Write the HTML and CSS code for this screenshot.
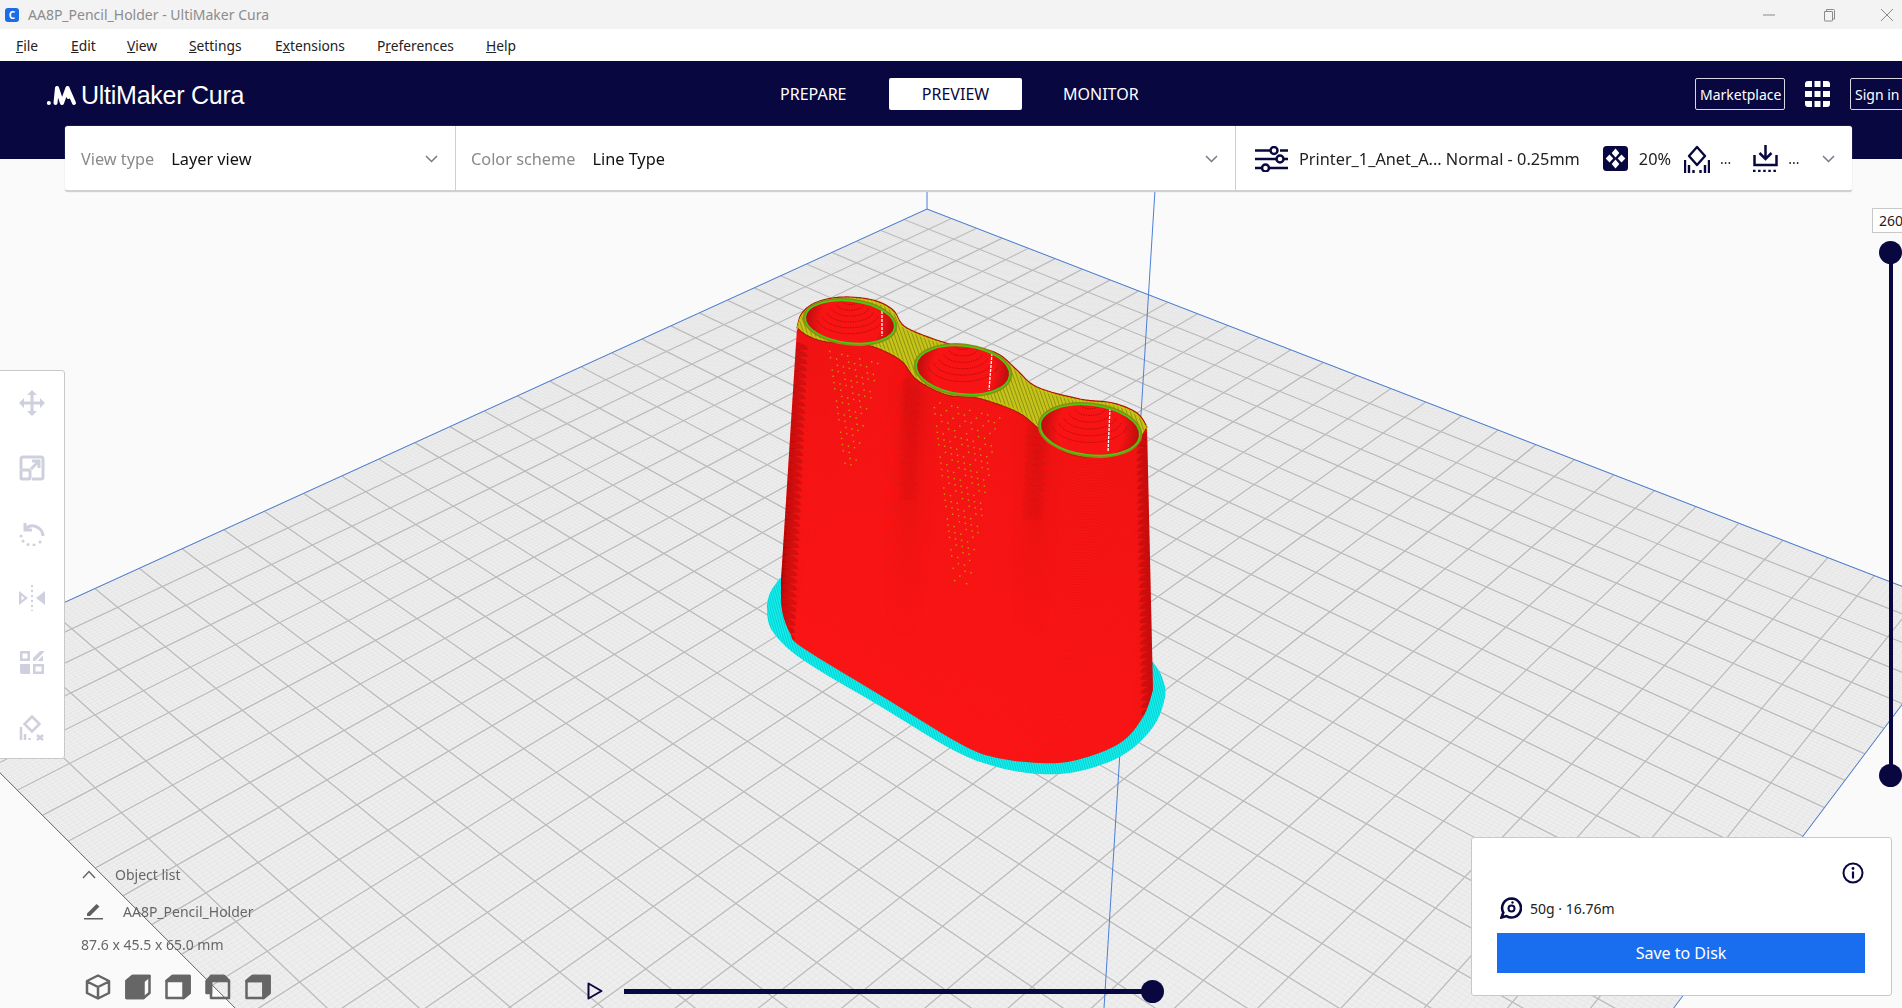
FILE: index.html
```html
<!DOCTYPE html>
<html>

<head>
    <title>AA8P_Pencil_Holder - UltiMaker Cura</title>
    <link rel="stylesheet" href="styles.css">
</head>

<body>
    <div class="titlebar">
        <span class="app-icon">C</span>
        <span class="title-text">AA8P_Pencil_Holder - UltiMaker Cura</span>
        <div class="win-controls">
            <svg width="14" height="14" viewBox="0 0 14 14"><path d="M1 7h12" stroke="#8a8a8a" fill="none"/></svg>
            <svg width="14" height="14" viewBox="0 0 14 14"><path d="M3.500 3.500h7.500a.5.5 0 0 1 .5.5v8.500a.5.5 0 0 1-.5.5H4a.5.5 0 0 1-.5-.5zM5.500 3.500V1.500h7a1 1 0 0 1 1 1V11h-2" stroke="#8a8a8a" fill="none"/></svg>
            <svg width="14" height="14" viewBox="0 0 14 14"><path d="M1 1l12 12M13 1L1 13" stroke="#8a8a8a" fill="none"/></svg>
        </div>
    </div>

    <div class="menubar">
        <span class="menu-item m-file"><u>F</u>ile</span>
        <span class="menu-item m-edit"><u>E</u>dit</span>
        <span class="menu-item m-view"><u>V</u>iew</span>
        <span class="menu-item m-settings"><u>S</u>ettings</span>
        <span class="menu-item m-ext">E<u>x</u>tensions</span>
        <span class="menu-item m-pref">P<u>r</u>eferences</span>
        <span class="menu-item m-help"><u>H</u>elp</span>
    </div>

    <div class="workspace">
        <header class="topbar">
            <div class="logo">
                <svg width="31" height="21" viewBox="0 0 31 21" fill="none" stroke="#fff" stroke-width="4" stroke-linecap="round">
                    <path d="M2.800 18h.1"/>
                    <path d="M11 3L9.500 18M11 3L16 18M21.500 3L16 18M21.500 3L22.500 12M21.500 3L28 18"/>
                </svg>
                <span class="logo-text">UltiMaker Cura</span>
            </div>
            <nav class="tabs">
                <span class="tab tab-prepare">PREPARE</span>
                <span class="tab tab-active">PREVIEW</span>
                <span class="tab tab-monitor">MONITOR</span>
            </nav>
            <div class="top-actions">
                <span class="outline-btn market">Marketplace</span>
                <svg class="apps" width="25" height="26" viewBox="0 0 25 26" fill="#fff">
                    <path d="M3 0h4v6H0V3a3 3 0 0 1 3-3zM9.500 0h6v6h-6zM18 0h4a3 3 0 0 1 3 3v3h-7zM0 10h7v6H0zM9.500 10h6v6h-6zM18 10h7v6h-7zM0 20h7v6H3a3 3 0 0 1-3-3zM9.500 20h6v6h-6zM18 20h7v3a3 3 0 0 1-3 3h-4z"/>
                </svg>
                <span class="outline-btn signin">Sign in</span>
            </div>
        </header>

        <div class="viewport">
            <canvas id="scene" width="1902" height="849"></canvas>

            <div class="toolbar">
                <svg viewBox="0 0 26 26" fill="#cfd0de"><path d="M13 0l5 5h-3.500v6.500H21V8l5 5-5 5v-3.500h-6.500V21H18l-5 5-5-5h3.500v-6.500H5V18l-5-5 5-5v3.500h6.500V5H8z"/></svg>
                <svg viewBox="0 0 26 26" fill="none" stroke="#cfd0de" stroke-width="3"><path d="M2 14V4a2 2 0 0 1 2-2h18a2 2 0 0 1 2 2v18a2 2 0 0 1-2 2H13"/><rect x="2" y="15" width="9" height="9" rx="1"/><path d="M12 14l8-8M13 6h7v7"/></svg>
                <svg viewBox="0 0 26 26" fill="none" stroke="#cfd0de" stroke-width="3"><path d="M6 3v7h7"/><path d="M6.500 9.500C9 6 13 5 17 6.500c4.500 1.800 7 6 7 9.500"/><path d="M2 16h.1M4 21h.1M9 24.500h.1M15 25h.1M21 22h.1" stroke-linecap="round"/></svg>
                <svg viewBox="0 0 26 26" fill="#cfd0de"><path d="M0 6l9 7-9 7zM2.500 10.500v5l3-2.500zM26 6v14l-9-7z" fill-rule="evenodd"/><path d="M13 0v26" fill="none" stroke="#cfd0de" stroke-width="2" stroke-dasharray="2 3"/></svg>
                <svg viewBox="0 0 26 26" fill="#cfd0de"><path d="M2 1h9v10H1V2a1 1 0 0 1 1-1zM3.500 3.500v5h5v-5zM14 8l7-7h4v1l-9 9h-2zM24 5.500V11h-5.500zM1 14h10v10H3a2 2 0 0 1-2-2zM14 14h11v10H14zM16.500 16.500v5h6v-5z" fill-rule="evenodd"/></svg>
                <svg viewBox="0 0 26 26" fill="none" stroke="#cfd0de" stroke-width="2.500"><path d="M13 1.500l7.500 7.500-7.500 7.500L5.500 9z"/><path d="M2 12v13M6 19v6M10.500 23v2"/><path d="M18 20l6 5M24 20l-6 5"/></svg>
            </div>

            <div class="vslider">
                <span class="layer-box">260</span>
                <span class="vtrack"></span>
                <span class="knob knob-top"></span>
                <span class="knob knob-bottom"></span>
            </div>

            <div class="objects">
                <div class="obj-head">
                    <svg width="14" height="9" viewBox="0 0 14 9"><path d="M1 8l6-6.500L13 8" stroke="#666" stroke-width="1.500" fill="none"/></svg>
                    <span>Object list</span>
                </div>
                <div class="obj-row">
                    <svg width="19" height="18" viewBox="0 0 19 18" fill="#5f5f5f"><path d="M3 11.500L12.500 2l3 2.500L6 14H3zM0 16h19v1.500H0z"/></svg>
                    <span>AA8P_Pencil_Holder</span>
                </div>
                <div class="obj-size">87.6 x 45.5 x 65.0 mm</div>
                <div class="cubes">
                    <svg viewBox="0 0 26 26" fill="none" stroke="#666" stroke-width="2.500" stroke-linejoin="round"><path d="M13 1.500L24 7v12l-11 5.500L2 19V7zM2 7.500l11 5.500 11-5.500M13 13v11"/></svg>
                    <svg viewBox="0 0 26 26" stroke="#666" stroke-width="2.500" stroke-linejoin="round" fill="none"><path d="M1.500 7l6-5h17v17l-6 5h-17z"/><path d="M1.500 7h17v17h-17zM7.500 2h17v0l-6 5h-17z" fill="#666"/><path d="M18.500 7l6-5"/></svg>
                    <svg viewBox="0 0 26 26" stroke="#666" stroke-width="2.500" stroke-linejoin="round" fill="none"><path d="M1.500 7l6-5h17v17l-6 5h-17z"/><path d="M1.500 7l6-5h17l-6 5zM18.500 7l6-5v17l-6 5z" fill="#666"/></svg>
                    <svg viewBox="0 0 26 26" stroke="#666" stroke-width="2.500" stroke-linejoin="round" fill="none"><path d="M6 2h13l5 5v17H6z"/><path d="M6 2h13l5 5H6zM1.500 7L6 2v17l-4.500 0z" fill="#666"/></svg>
                    <svg viewBox="0 0 26 26" stroke="#666" stroke-width="2.500" stroke-linejoin="round" fill="none"><path d="M1.500 7l6-5h17v17l-6 5h-17zM1.500 7h17v17"/><path d="M7.500 2h17v17l-6 5V7h-17z" fill="#666"/></svg>
                </div>
            </div>

            <div class="play-bar">
                <svg width="18" height="18" viewBox="0 0 18 18"><path d="M2.500 1.500L15.500 9 2.500 16.500z" fill="none" stroke="#08073f" stroke-width="2" stroke-linejoin="round"/></svg>
                <span class="htrack"><span class="knob knob-end"></span></span>
            </div>

            <div class="output">
                <svg class="info" width="22" height="22" viewBox="0 0 22 22"><circle cx="11" cy="11" r="9.500" fill="none" stroke="#08073f" stroke-width="2"/><path d="M11 9.500v7" stroke="#08073f" stroke-width="2.200"/><circle cx="11" cy="6.500" r="1.400" fill="#08073f"/></svg>
                <div class="material">
                    <svg width="22" height="22" viewBox="0 0 22 22"><path d="M11.500 1.500a9.500 9.500 0 1 1-5 17.600L1.500 20.500l1.800-5A9.500 9.500 0 0 1 11.500 1.500z" fill="none" stroke="#08073f" stroke-width="2.600"/><circle cx="11.500" cy="11.500" r="3" fill="none" stroke="#08073f" stroke-width="2"/><circle cx="12.500" cy="5.500" r="1.200" fill="#08073f"/></svg>
                    <span>50g · 16.76m</span>
                </div>
                <button class="save-btn">Save to Disk</button>
            </div>
        </div>

        <div class="stage-panel">
            <div class="sp-cell sp-view">
                <span class="sp-label">View type</span>
                <span class="sp-value">Layer view</span>
                <svg class="chev" width="13" height="8" viewBox="0 0 13 8"><path d="M1 1l5.500 5.500L12 1" stroke="#77778a" stroke-width="1.500" fill="none"/></svg>
            </div>
            <div class="sp-cell sp-color">
                <span class="sp-label">Color scheme</span>
                <span class="sp-value">Line Type</span>
                <svg class="chev" width="13" height="8" viewBox="0 0 13 8"><path d="M1 1l5.500 5.500L12 1" stroke="#77778a" stroke-width="1.500" fill="none"/></svg>
            </div>
            <div class="sp-cell sp-print">
                <svg width="33" height="26" viewBox="0 0 33 26" fill="none" stroke="#08073f" stroke-width="2.500">
                    <path d="M0 4.500h15M25 4.500h8M0 13h21M29 13h4M0 22h6M15 22h18"/>
                    <circle cx="19" cy="4.500" r="3.500"/><circle cx="25" cy="13" r="3.500"/><circle cx="10.500" cy="22" r="3.500"/>
                </svg>
                <span class="sp-printer">Printer_1_Anet_A... Normal - 0.25mm</span>
                <svg class="ic-infill" width="25" height="25" viewBox="0 0 25 25">
                    <rect width="25" height="25" rx="3.500" fill="#08073f"/>
                    <path d="M12.500 2.500l3.800 4.500-3.800 4.500L8.700 7zM6.500 8.500l3.800 4-3.800 4-3.800-4zM18.500 8.500l3.800 4-3.800 4-3.800-4zM12.500 13.500l3.800 4.500-3.800 4.500L8.700 18z" fill="#fff"/>
                </svg>
                <span class="sp-pct">20%</span>
                <svg class="ic-support" width="26" height="28" viewBox="0 0 26 28" fill="none" stroke="#08073f" stroke-width="2.400" stroke-linejoin="round">
                    <path d="M13 2l8 9-8 9-8-9z"/>
                    <path d="M1 15v13M5 20v8M9.500 25v3M16.500 25v3M21 20v8M25 15v13"/>
                </svg>
                <span class="sp-dots">...</span>
                <svg class="ic-adhesion" width="25" height="27" viewBox="0 0 25 27" fill="none" stroke="#08073f" stroke-width="2.500">
                    <path d="M12.500 0v13M6.500 8l6 6 6-6"/>
                    <path d="M1.500 10v10h22V10"/>
                    <path d="M0 26h25" stroke-dasharray="2.500 2.600"/>
                </svg>
                <span class="sp-dots">...</span>
                <svg class="chev" width="13" height="8" viewBox="0 0 13 8"><path d="M1 1l5.500 5.500L12 1" stroke="#77778a" stroke-width="1.500" fill="none"/></svg>
            </div>
        </div>
    </div>

    <script src="scene.js"></script>
</body>

</html>
```

FILE: styles.css
```css
* {
    box-sizing: border-box;
}

html,
body {
    margin: 0;
    height: 100%;
    overflow: hidden;
}

body {
    width: 1902px;
    height: 1008px;
    font-family: "Noto Sans", Arial, sans-serif;
    background-color: #fafafa;
    display: flex;
    flex-direction: column;
}

svg {
    flex: none;
}

.titlebar {
    height: 29px;
    background-color: #f3f3f3;
    display: flex;
    align-items: center;
    padding-left: 5px;
    flex: none;
}

.app-icon {
    width: 14px;
    height: 14px;
    border-radius: 3px;
    background-color: #1a6ce8;
    color: white;
    font-size: 10px;
    font-weight: bold;
    line-height: 14px;
    text-align: center;
}

.title-text {
    margin-left: 9px;
    font-size: 14px;
    color: #8c8c8c;
}

.win-controls {
    margin-left: auto;
    display: flex;
    gap: 45px;
    padding-right: 8px;
}

.menubar {
    height: 32px;
    background-color: white;
    display: flex;
    align-items: center;
    font-size: 13.8px;
    color: #222;
    flex: none;
}

.menu-item {
    flex: none;
}

.m-file { margin-left: 16px; width: 55px; }
.m-edit { width: 56px; }
.m-view { width: 62px; }
.m-settings { width: 86px; }
.m-ext { width: 102px; }
.m-pref { width: 109px; }

.workspace {
    position: relative;
    flex: 1;
    display: flex;
    flex-direction: column;
    min-height: 0;
}

.topbar {
    height: 98px;
    background-color: #08073f;
    color: white;
    display: flex;
    align-items: flex-start;
    flex: none;
    overflow: hidden;
}

.logo {
    display: flex;
    align-items: center;
    gap: 4px;
    margin: 20px 0 0 46px;
    width: 700px;
}

.logo-text {
    font-family: "Liberation Sans", Arial, sans-serif;
    font-size: 25px;
    letter-spacing: -0.25px;
    line-height: 28px;
}

.tabs {
    display: flex;
    align-items: center;
    margin: 17px 0 0 34px;
    font-size: 16px;
    height: 32px;
}

.tab-prepare { width: 109px; }

.tab-active {
    width: 133px;
    height: 32px;
    line-height: 32px;
    text-align: center;
    background-color: white;
    color: #08073f;
    border-radius: 2px;
}

.tab-monitor { margin-left: 41px; }

.top-actions {
    position: absolute;
    top: 17px;
    left: 1695px;
    display: flex;
    align-items: center;
    gap: 20px;
}

.outline-btn {
    height: 32px;
    line-height: 32px;
    border: 1px solid #d8d8e4;
    border-radius: 2px;
    font-size: 14px;
    padding: 0 4px;
    color: white;
    white-space: nowrap;
}

.market { width: 90px; }

.signin {
    width: 70px;
    flex: none;
}

.viewport {
    position: relative;
    flex: 1;
    overflow: hidden;
}

#scene {
    display: block;
}

.stage-panel {
    position: absolute;
    left: 65px;
    top: 65px;
    width: 1787px;
    height: 66px;
    background-color: white;
    border-radius: 3px;
    border-bottom: 2px solid #d0d0d0;
    box-shadow: 0 0 1px #b8b8c8;
    display: flex;
    font-size: 16.3px;
}

.sp-cell {
    display: flex;
    align-items: center;
    height: 100%;
    padding-top: 1px;
    border-right: 1px solid #cfcfcf;
}

.sp-view { width: 391px; padding-left: 16px; padding-right: 17px; }
.sp-color { width: 780px; padding-left: 15px; padding-right: 17px; }
.sp-print { flex: 1; padding-left: 19px; padding-right: 17px; border-right: none; }

.sp-label {
    color: #8a8a8a;
    margin-right: 17px;
}

.sp-value {
    color: #111;
}

.chev {
    margin-left: auto;
}

.sp-printer {
    margin-left: 11px;
    color: #222;
    white-space: nowrap;
}

.ic-infill { margin-left: 23px; }

.sp-pct {
    margin-left: 11px;
    color: #222;
}

.ic-support { margin-left: 13px; }
.ic-adhesion { margin-left: 22px; }

.sp-dots {
    margin-left: 10px;
    color: #222;
    font-size: 14px;
}

.toolbar {
    position: absolute;
    left: -1px;
    top: 211px;
    width: 66px;
    height: 389px;
    background-color: white;
    border: 1px solid #c8c8c8;
    border-radius: 0 3px 3px 0;
    display: flex;
    flex-direction: column;
    align-items: center;
    gap: 39px;
    padding-top: 19px;
}

.toolbar svg {
    width: 26px;
    height: 26px;
}

.vslider {
    position: absolute;
    left: 1873px;
    top: 49px;
    width: 29px;
    height: 640px;
}

.layer-box {
    position: absolute;
    left: -1px;
    top: 0;
    width: 36px;
    height: 25px;
    background-color: white;
    border: 1px solid #c8c8c8;
    font-size: 14px;
    line-height: 23px;
    padding-left: 6px;
    color: #222;
}

.vtrack {
    position: absolute;
    left: 16px;
    top: 45px;
    width: 4px;
    height: 524px;
    background-color: #08073f;
}

.knob {
    position: absolute;
    width: 23px;
    height: 23px;
    border-radius: 50%;
    background-color: #08073f;
}

.knob-top { left: 6px; top: 33px; }
.knob-bottom { left: 6px; top: 556px; }

.objects {
    position: absolute;
    left: 81px;
    top: 703px;
    font-size: 14px;
    color: #666;
}

.obj-head {
    display: flex;
    align-items: center;
    gap: 19px;
    height: 24px;
    padding-left: 1px;
}

.obj-row {
    display: flex;
    align-items: center;
    gap: 20px;
    margin-top: 13px;
    padding-left: 3px;
    height: 24px;
}

.obj-size {
    margin-top: 10px;
    height: 24px;
    line-height: 24px;
}

.cubes {
    display: flex;
    gap: 14px;
    margin-top: 17px;
    margin-left: 4px;
}

.cubes svg {
    width: 26px;
    height: 26px;
}

.play-bar {
    position: absolute;
    left: 586px;
    top: 823px;
    display: flex;
    align-items: center;
    gap: 20px;
}

.htrack {
    position: relative;
    display: block;
    width: 528px;
    height: 5px;
    background-color: #08073f;
}

.knob-end {
    right: -12px;
    top: -9px;
}

.output {
    position: absolute;
    left: 1471px;
    top: 678px;
    width: 421px;
    height: 159px;
    background-color: white;
    border: 1px solid #c8c8c8;
    border-radius: 3px;
    padding: 24px 26px 0 25px;
    display: flex;
    flex-direction: column;
}

.info {
    align-self: flex-end;
    margin-right: 1px;
}

.material {
    display: flex;
    align-items: center;
    gap: 8px;
    margin-top: 13px;
    padding-left: 3px;
    font-size: 14px;
    color: #222;
}

.save-btn {
    margin-top: 14px;
    height: 40px;
    background-color: #196ef0;
    color: white;
    border: none;
    font-family: inherit;
    font-size: 16px;
}
```

FILE: scene.js
```js
const canvas = document.getElementById('scene');
const ctx = canvas.getContext('2d');

// canvas starts at y=159 in the window, drawing below uses window coordinates
ctx.translate(0, -159);

// plate corners, apex / right / bottom / left
const A = [927, 209], B = [1971, 613], C = [1056, 1829], D = [-97, 676];

function makeHomography(p0, p1, p2, p3) {
    const dx1 = p1[0] - p2[0], dx2 = p3[0] - p2[0], sx = p0[0] - p1[0] + p2[0] - p3[0];
    const dy1 = p1[1] - p2[1], dy2 = p3[1] - p2[1], sy = p0[1] - p1[1] + p2[1] - p3[1];
    const det = dx1 * dy2 - dx2 * dy1;
    const g = (sx * dy2 - dx2 * sy) / det;
    const h = (dx1 * sy - sx * dy1) / det;
    const a = p1[0] - p0[0] + g * p1[0], b = p3[0] - p0[0] + h * p3[0], c = p0[0];
    const d = p1[1] - p0[1] + g * p1[1], e = p3[1] - p0[1] + h * p3[1], f = p0[1];
    return (u, v) => {
        const w = g * u + h * v + 1;
        return [(a * u + b * v + c) / w, (d * u + e * v + f) / w];
    };
}

const plate = makeHomography(A, B, C, D);

function line(p, q, color, width) {
    ctx.strokeStyle = color;
    ctx.lineWidth = width;
    ctx.beginPath();
    ctx.moveTo(p[0], p[1]);
    ctx.lineTo(q[0], q[1]);
    ctx.stroke();
}

function drawPlate() {
    const cells = 30;
    ctx.fillStyle = '#fafafa';
    ctx.fillRect(0, 159, 1902, 849);

    ctx.save();
    ctx.beginPath();
    ctx.moveTo(A[0], A[1]);
    ctx.lineTo(B[0], B[1]);
    ctx.lineTo(C[0], C[1]);
    ctx.lineTo(D[0], D[1]);
    ctx.closePath();
    ctx.fillStyle = '#eeeeee';
    ctx.fill();
    ctx.clip();

    for (let i = 0; i <= cells * 10; i++) {
        const t = i / (cells * 10);
        line(plate(t, 0), plate(t, 1), '#e6e6e6', 1);
        line(plate(0, t), plate(1, t), '#e6e6e6', 1);
    }
    for (let i = 0; i <= cells; i++) {
        const t = i / cells;
        line(plate(t, 0), plate(t, 1), '#bcbcbc', 1.3);
        line(plate(0, t), plate(1, t), '#bcbcbc', 1.3);
    }
    ctx.restore();

    line(A, B, '#4a7fd6', 1);
    line(A, D, '#4a7fd6', 1);
    line(D, C, '#4a7fd6', 1);
    line(B, C, '#4a7fd6', 1);
    line([927, 190], A, '#4a7fd6', 1);
    line([1155, 190], [1104, 1008], '#4a7fd6', 1);
}

// Catmull-Rom resampling, keeps the outlines smooth
function smooth(pts, steps) {
    const out = [];
    for (let i = 0; i < pts.length - 1; i++) {
        const p0 = pts[Math.max(i - 1, 0)], p1 = pts[i], p2 = pts[i + 1], p3 = pts[Math.min(i + 2, pts.length - 1)];
        for (let s = 0; s < steps; s++) {
            const t = s / steps, t2 = t * t, t3 = t2 * t;
            out.push([
                0.5 * (2 * p1[0] + (p2[0] - p0[0]) * t + (2 * p0[0] - 5 * p1[0] + 4 * p2[0] - p3[0]) * t2 + (3 * p1[0] - p0[0] - 3 * p2[0] + p3[0]) * t3),
                0.5 * (2 * p1[1] + (p2[1] - p0[1]) * t + (2 * p0[1] - 5 * p1[1] + 4 * p2[1] - p3[1]) * t2 + (3 * p1[1] - p0[1] - 3 * p2[1] + p3[1]) * t3)
            ]);
        }
    }
    out.push(pts[pts.length - 1]);
    return out;
}

// resample a polyline to n points evenly spaced by length
function resample(pts, n) {
    const lens = [0];
    for (let i = 1; i < pts.length; i++) {
        lens.push(lens[i - 1] + Math.hypot(pts[i][0] - pts[i - 1][0], pts[i][1] - pts[i - 1][1]));
    }
    const total = lens[lens.length - 1];
    const out = [];
    let j = 0;
    for (let k = 0; k < n; k++) {
        const target = total * k / (n - 1);
        while (j < pts.length - 2 && lens[j + 1] < target) j++;
        const f = (target - lens[j]) / (lens[j + 1] - lens[j] || 1);
        out.push([pts[j][0] + (pts[j + 1][0] - pts[j][0]) * f, pts[j][1] + (pts[j + 1][1] - pts[j][1]) * f]);
    }
    return out;
}

function tracePath(pts) {
    ctx.beginPath();
    pts.forEach((p, i) => (i ? ctx.lineTo(p[0], p[1]) : ctx.moveTo(p[0], p[1])));
}

const topBack = smooth([[797, 328], [802, 313], [817, 302], [843, 297], [873, 300], [893, 310], [907, 328], [953, 345], [980, 348], [1000, 355], [1017, 370], [1037, 387], [1080, 399], [1113, 403], [1137, 413], [1147, 427]], 8);
const topFront = smooth([[797, 328], [808, 336], [827, 342], [867, 345], [900, 360], [917, 380], [947, 395], [977, 398], [1017, 412], [1040, 430], [1067, 453], [1107, 457], [1133, 447], [1147, 427]], 8);
const baseFront = smooth([[781, 580], [782, 610], [790, 633], [803, 648], [880, 695], [957, 742], [993, 757], [1040, 763], [1077, 760], [1120, 743], [1143, 717], [1153, 690]], 8);
const leftEdge = [[797, 328], [781, 580]];
const rightEdge = [[1147, 427], [1153, 690]];

const skirtOuter = smooth([[780, 578], [770, 593], [767, 610], [773, 632], [803, 660], [878, 705], [953, 750], [997, 767], [1040, 774], [1080, 771], [1123, 755], [1153, 727], [1165, 697], [1162, 677], [1153, 662]], 8);

function drawSkirt() {
    ctx.save();
    tracePath(skirtOuter);
    ctx.closePath();
    ctx.fillStyle = '#10f0f0';
    ctx.fill();
    ctx.clip();
    ctx.strokeStyle = 'rgba(0, 90, 90, 0.32)';
    ctx.lineWidth = 0.7;
    for (let x = 700; x < 1300; x += 2.4) {
        ctx.beginPath();
        ctx.moveTo(x, 570);
        ctx.lineTo(x + 60, 790);
        ctx.stroke();
    }
    ctx.restore();
}

function bodyPath() {
    const pts = [].concat(topBack, rightEdge, baseFront.slice().reverse(), leftEdge.slice().reverse());
    tracePath(pts);
    ctx.closePath();
}

// overlapping half ellipses give the stepped look where layers turn away
function scallops(from, to, rx, alpha) {
    const steps = Math.round((to[1] - from[1]) / 7);
    ctx.fillStyle = 'rgba(90, 0, 0, ' + alpha + ')';
    for (let i = 0; i <= steps; i++) {
        const t = i / steps;
        ctx.beginPath();
        ctx.ellipse(from[0] + (to[0] - from[0]) * t, from[1] + (to[1] - from[1]) * t, rx, 8, 0, Math.PI, 0);
        ctx.fill();
    }
}

function drawBody() {
    ctx.save();
    bodyPath();
    ctx.fillStyle = '#ff1616';
    ctx.fill();
    ctx.clip();

    // soft shading on the valleys between the three tubes, fades out downwards
    ctx.filter = 'blur(9px)';
    const fade = ctx.createLinearGradient(0, 370, 0, 640);
    fade.addColorStop(0, 'rgba(120, 0, 0, 0.26)');
    fade.addColorStop(1, 'rgba(120, 0, 0, 0)');
    ctx.fillStyle = fade;
    [[908, 922, 898, 908, 640], [1034, 1048, 1024, 1036, 640]].forEach(s => {
        ctx.beginPath();
        ctx.moveTo(s[0], 370);
        ctx.lineTo(s[1], 390);
        ctx.lineTo(s[3], s[4]);
        ctx.lineTo(s[2], s[4]);
        ctx.closePath();
        ctx.fill();
    });
    ctx.filter = 'none';

    // layer lines, lerp between base contour and top contour
    const n = 240;
    const a = resample(baseFront, n), b = resample(topFront, n);
    const layers = 190;
    ctx.lineWidth = 0.7;
    for (let l = 0; l <= layers; l++) {
        const t = l / layers;
        ctx.strokeStyle = 'rgba(120, 0, 0, ' + (0.1 + 0.12 * t) + ')';
        const c = a.map((p, i) => [p[0] + (b[i][0] - p[0]) * t, p[1] + (b[i][1] - p[1]) * t]);
        tracePath(c);
        ctx.stroke();
    }

    scallops([793, 350], [780, 640], 15, 0.2);
    scallops([1151, 440], [1156, 715], 15, 0.2);
    scallops([1037, 432], [1032, 520], 11, 0.05);
    scallops([912, 385], [908, 500], 9, 0.04);

    // stray yellow dots under the webs
    ctx.fillStyle = '#c09a00';
    [[826, 878, 350, 460], [930, 1000, 400, 575]].forEach(r => {
        for (let y = r[2]; y < r[3]; y += 6) {
            const f = (y - r[2]) / (r[3] - r[2]);
            const x0 = r[0] + (r[1] - r[0]) * 0.3 * f;
            const x1 = r[1] - (r[1] - r[0]) * 0.45 * f;
            for (let x = x0 + (y % 12 ? 3 : 0); x < x1; x += 6) {
                if ((x * 7 + y * 13) % 5 > 1.2) ctx.fillRect(x, y + (x - r[0]) * 0.25, 1.4, 1.4);
            }
        }
    });
    ctx.restore();
}

function drawTop() {
    ctx.save();
    tracePath(topBack.concat(topFront.slice().reverse()));
    ctx.closePath();
    ctx.fillStyle = '#c4c41a';
    ctx.fill();
    ctx.clip();
    ctx.strokeStyle = 'rgba(70, 70, 0, 0.5)';
    ctx.lineWidth = 0.8;
    for (let x = 760; x < 1200; x += 3.6) {
        ctx.beginPath();
        ctx.moveTo(x, 280);
        ctx.lineTo(x + 70, 480);
        ctx.stroke();
    }
    ctx.restore();

    ctx.strokeStyle = '#b01808';
    ctx.lineWidth = 1.2;
    tracePath(topBack);
    ctx.stroke();
    tracePath(topFront);
    ctx.stroke();
    ctx.strokeStyle = '#c6c800';
    ctx.lineWidth = 1;
    tracePath(topBack.map(p => [p[0], p[1] + 2]));
    ctx.stroke();
    tracePath(topFront.map(p => [p[0], p[1] - 2]));
    ctx.stroke();
}

function drawHole(cx, cy, rx, ry, seam) {
    ctx.save();
    ctx.beginPath();
    ctx.ellipse(cx, cy, rx + 2.5, ry + 2.5, 0.12, 0, Math.PI * 2);
    ctx.fillStyle = '#8c8c10';
    ctx.fill();
    ctx.beginPath();
    ctx.ellipse(cx, cy, rx, ry, 0.12, 0, Math.PI * 2);
    ctx.fillStyle = '#f81414';
    ctx.fill();
    ctx.clip();

    // inner wall, arcs stacked down the tube
    ctx.strokeStyle = 'rgba(60, 0, 0, 0.5)';
    ctx.lineWidth = 0.7;
    ctx.setLineDash([1.5, 1]);
    for (let k = 0; k < 6; k++) {
        const w = rx * (0.2 + k * 0.11);
        ctx.beginPath();
        ctx.ellipse(cx, cy - ry * 1.05 + k * ry * 0.16, w, w * 0.5, 0, 0.2, Math.PI - 0.2);
        ctx.stroke();
    }
    ctx.setLineDash([]);
    const g = ctx.createRadialGradient(cx, cy, rx * 0.65, cx, cy, rx * 1.05);
    g.addColorStop(0, 'rgba(90, 0, 0, 0)');
    g.addColorStop(1, 'rgba(90, 0, 0, 0.45)');
    ctx.fillStyle = g;
    ctx.fillRect(cx - rx, cy - ry, rx * 2, ry * 2);

    ctx.strokeStyle = '#ffffff';
    ctx.lineWidth = 1.3;
    ctx.setLineDash([3, 1]);
    ctx.beginPath();
    ctx.moveTo(seam[0], seam[1]);
    ctx.lineTo(seam[2], seam[3]);
    ctx.stroke();
    ctx.restore();

    ctx.beginPath();
    ctx.ellipse(cx, cy, rx, ry, 0.12, 0, Math.PI * 2);
    ctx.strokeStyle = '#46cc14';
    ctx.lineWidth = 1.6;
    ctx.stroke();
}

drawPlate();
drawSkirt();
drawBody();
drawTop();
drawHole(850, 322, 45, 21, [882, 307, 882, 336]);
drawHole(963, 370, 47, 24, [992, 353, 989, 390]);
drawHole(1090, 430, 50, 25, [1110, 408, 1108, 452]);
```
